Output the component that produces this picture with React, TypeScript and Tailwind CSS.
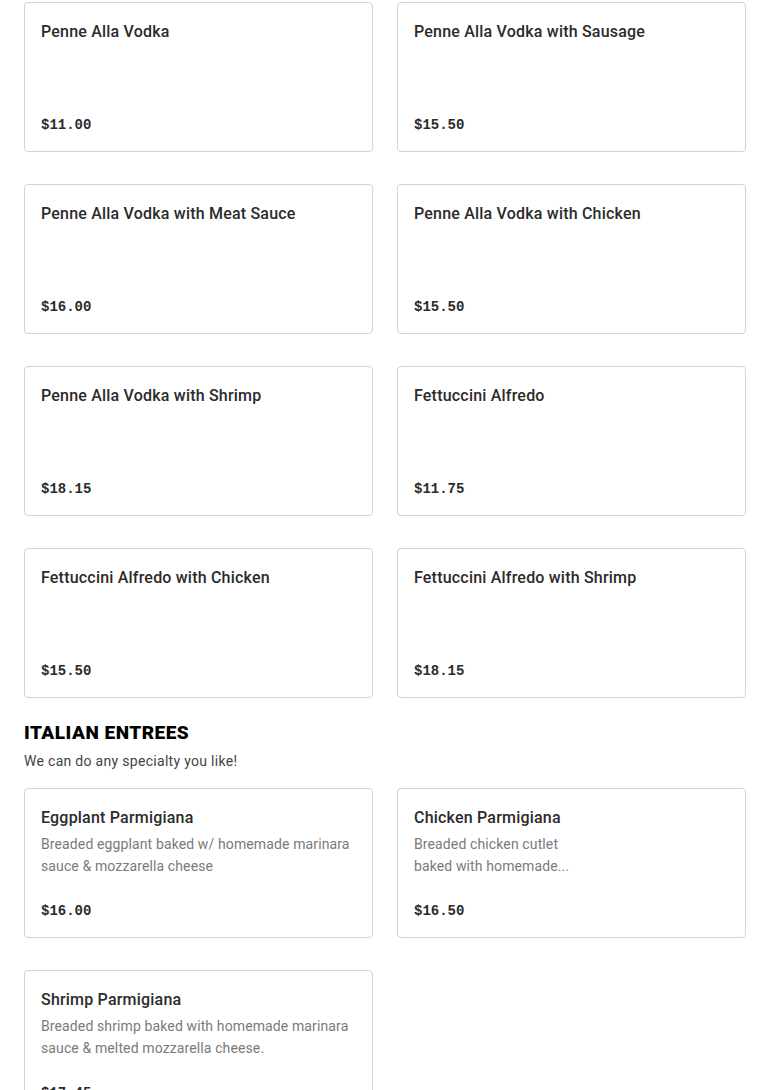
import React from "react";

type Item = { name: string; desc?: string[]; price: string };

const pasta: Item[] = [
  { name: "Penne Alla Vodka", price: "$11.00" },
  { name: "Penne Alla Vodka with Sausage", price: "$15.50" },
  { name: "Penne Alla Vodka with Meat Sauce", price: "$16.00" },
  { name: "Penne Alla Vodka with Chicken", price: "$15.50" },
  { name: "Penne Alla Vodka with Shrimp", price: "$18.15" },
  { name: "Fettuccini Alfredo", price: "$11.75" },
  { name: "Fettuccini Alfredo with Chicken", price: "$15.50" },
  { name: "Fettuccini Alfredo with Shrimp", price: "$18.15" },
];

const entrees: Item[] = [
  {
    name: "Eggplant Parmigiana",
    desc: ["Breaded eggplant baked w/ homemade marinara", "sauce & mozzarella cheese"],
    price: "$16.00",
  },
  {
    name: "Chicken Parmigiana",
    desc: ["Breaded chicken cutlet", "baked with homemade..."],
    price: "$16.50",
  },
  {
    name: "Shrimp Parmigiana",
    desc: ["Breaded shrimp baked with homemade marinara", "sauce & melted mozzarella cheese."],
    price: "$17.45",
  },
];

/* ================== CARD ================== */
const MenuCard: React.FC<{ item: Item }> = ({ item }) => (
  <div className="h-[150px] flex flex-col justify-between border border-[#d3d3d3] rounded-[4px] bg-white px-4 pt-[17px] pb-[15px]">
    <div>
      <h3 className="text-[16px] leading-6 font-medium tracking-[0.2px] text-[#2b2b2b]">{item.name}</h3>
      {item.desc && (
        <p className="mt-[3px] text-[14px] leading-[22px] tracking-[0.12px] text-[#7a7a7a]">
          {item.desc.map((l, i) => (
            <span key={i} className="block">{l}</span>
          ))}
        </p>
      )}
    </div>
    <span className="text-[14px] leading-[22px] font-bold text-[#2b2b2b] font-['Liberation_Mono',monospace]">
      {item.price}
    </span>
  </div>
);

/* ================== PAGE ================== */
const App: React.FC = () => {
  return (
    <div className="min-h-screen bg-white px-6 pt-[2px] font-['Roboto',sans-serif]">
      <div className="grid grid-cols-2 gap-x-6 gap-y-8">
        {pasta.map((p) => (
          <MenuCard key={p.name} item={p} />
        ))}
      </div>

      {/* Italian Entrees */}
      <div className="mt-[23px] mb-[17px]">
        <h2 className="text-[19px] leading-6 font-black tracking-[0.5px] uppercase text-black">Italian Entrees</h2>
        <p className="mt-[6px] text-[14px] leading-5 tracking-[0.3px] text-[#444]">We can do any specialty you like!</p>
      </div>
      <div className="grid grid-cols-2 gap-x-6 gap-y-8 pb-8">
        {entrees.map((p) => (
          <MenuCard key={p.name} item={p} />
        ))}
      </div>
    </div>
  );
};

export default App;
